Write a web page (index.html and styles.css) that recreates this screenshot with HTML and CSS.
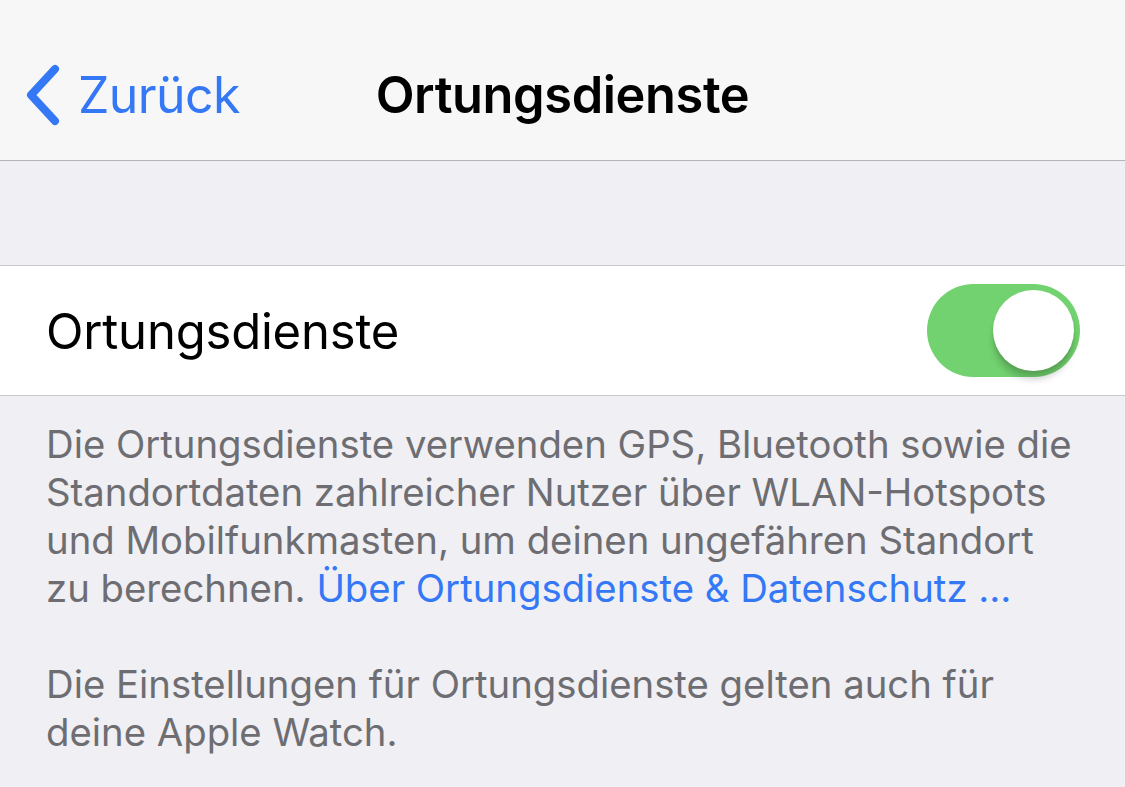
FILE: index.html
```html
<!DOCTYPE html>
<html lang="de">
<head>
<meta charset="utf-8">
<link rel="stylesheet" href="styles.css">
</head>
<body>
<header class="navbar">
  <a class="back">
    <svg class="chev" width="40" height="64" viewBox="0 0 40 64"><path d="M32 6 L8 32 L32 58" fill="none" stroke="#3478f6" stroke-width="8" stroke-linecap="round" stroke-linejoin="round"/></svg>
    <span class="back-label">Zurück</span>
  </a>
  <h1 class="title">Ortungsdienste</h1>
</header>
<div class="spacer"></div>
<section class="group">
  <div class="row">
    <span class="row-label">Ortungsdienste</span>
    <div class="switch on"><div class="knob"></div></div>
  </div>
</section>
<footer class="notes">
  <p class="note">Die Ortungsdienste verwenden GPS, Bluetooth sowie die Standortdaten zahlreicher Nutzer über WLAN-Hotspots und Mobilfunkmasten, um deinen ungefähren Standort zu berechnen. <a class="link">Über Ortungsdienste &amp; Datenschutz …</a></p>
  <p class="note">Die Einstellungen für Ortungsdienste gelten auch für deine Apple Watch.</p>
</footer>
</body>
</html>
```
FILE: styles.css
```css
html, body {
  margin: 0;
  padding: 0;
}
body {
  width: 1125px;
  height: 787px;
  overflow: hidden;
  background: #efeff4;
  font-family: Inter, "Noto Sans", sans-serif;
  -webkit-font-smoothing: antialiased;
}
.navbar {
  height: 161px;
  box-sizing: border-box;
  background: #f7f7f8;
  border-bottom: 1px solid #b5b5b8;
  position: relative;
  display: flex;
  align-items: flex-start;
  padding-top: 30px;
}
.back {
  display: flex;
  align-items: center;
  margin-left: 23px;
  margin-top: 33px;
  color: #3478f6;
}
.chev { display: block; }
.back-label {
  font-size: 50px;
  margin-left: 15px;
  letter-spacing: -0.6px;
}
.title {
  position: absolute;
  left: 0;
  right: 0;
  top: 65px;
  margin: 0;
  text-align: center;
  font-size: 50.5px;
  font-weight: 600;
  color: #000;
  letter-spacing: -0.4px;
  line-height: 60px;
}
.spacer {
  height: 104px;
}
.group {
  background: #fff;
  border-top: 1px solid #c8c7cc;
  border-bottom: 1px solid #c8c7cc;
}
.row {
  height: 129px;
  display: flex;
  align-items: center;
  justify-content: space-between;
  padding: 0 45px 0 46px;
}
.row-label {
  font-size: 49px;
  color: #000;
  letter-spacing: -0.2px;
  padding-top: 2px;
}
.switch {
  width: 153px;
  height: 93px;
  border-radius: 47px;
  background: #72d26f;
  position: relative;
}
.knob {
  position: absolute;
  right: 6px;
  top: 6px;
  width: 81px;
  height: 81px;
  border-radius: 50%;
  background: #fff;
  box-shadow: 0 9px 6px rgba(0,0,0,0.16), 0 3px 3px rgba(0,0,0,0.08);
}
.notes {
  padding: 24px 47px 0 46px;
}
.note {
  margin: 0 0 48px 0;
  font-size: 38.3px;
  line-height: 48px;
  color: #6d6d72;
  letter-spacing: 0;
}
.link {
  color: #3478f6;
}
```
